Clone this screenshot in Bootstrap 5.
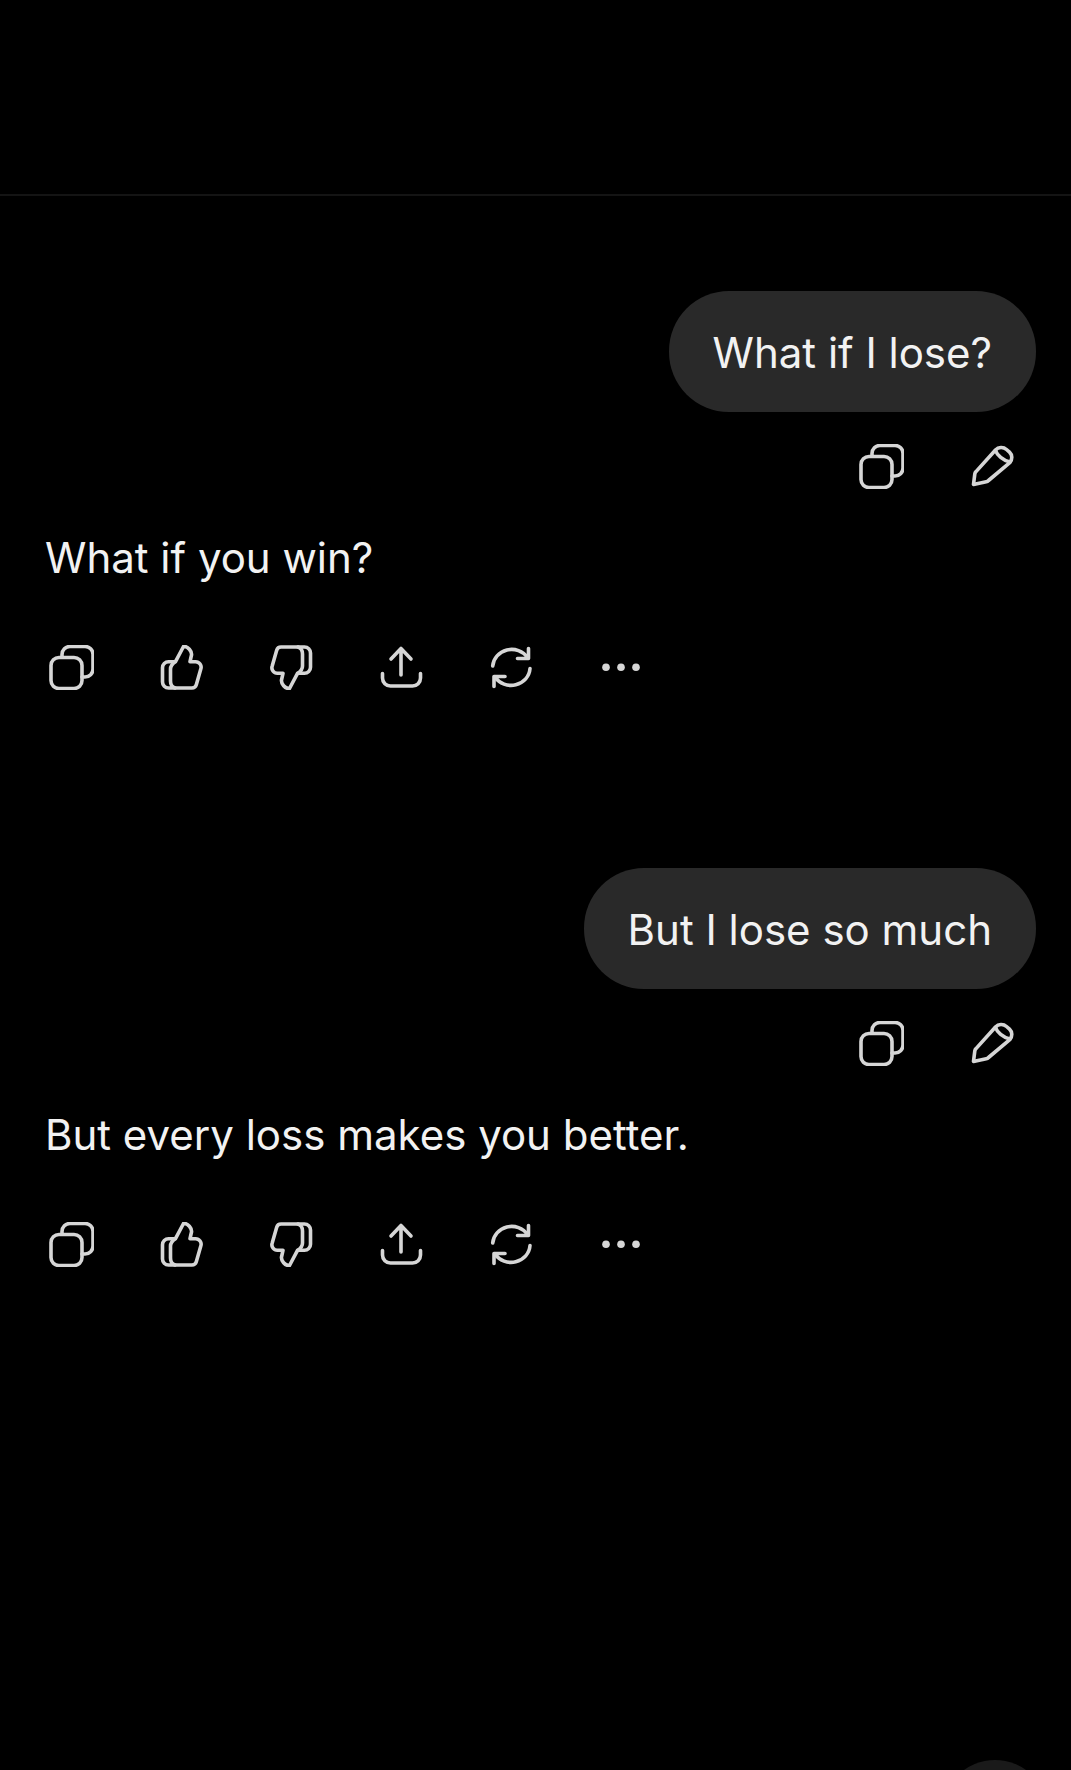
<!DOCTYPE html>
<html lang="en">
<head>
    <meta charset="UTF-8">
    <title>Chat</title>
    <link href="https://cdn.jsdelivr.net/npm/bootstrap@5.3.0/dist/css/bootstrap.min.css" rel="stylesheet">
    <style>
        body {
            background-color: #000;
            color: #f2f2f2;
            font-family: Inter, Roboto, "Liberation Sans", sans-serif;
        }
        .chat-page {
            height: 1770px;
            overflow: hidden;
        }
        .chat-header {
            height: 196px;
            border-bottom: 2px solid #141414;
        }
        .chat-body {
            padding: 95px 35px 0 45px;
        }
        .msg-group + .msg-group {
            margin-top: 178px;
        }
        .user-bubble {
            height: 121px;
            padding: 0 44px;
            border-radius: 60px;
            background: #292929;
            font-size: 42px;
            line-height: 123px;
        }
        .user-actions {
            gap: 65px;
            margin-top: 32px;
            margin-right: 22px;
        }
        .reply-text {
            margin: 38px 0 0;
            font-size: 42px;
            line-height: 62px;
        }
        .reply-actions {
            gap: 65px;
            margin-top: 56px;
            margin-left: 4px;
        }
        .act-icon {
            width: 45px;
            height: 45px;
            flex: none;
            fill: none;
            stroke: #d6d6d6;
            stroke-width: 3.6;
            stroke-linecap: round;
            stroke-linejoin: round;
        }
        .scroll-btn {
            top: 1760px;
            left: 942px;
            width: 106px;
            height: 106px;
            background: #1a1a1a;
        }
    </style>
</head>
<body>

<svg width="0" height="0" class="position-absolute">
    <symbol id="i-copy" viewBox="0 0 45 45">
        <rect x="2" y="12.5" width="31" height="31" rx="8"/>
        <path d="M13 12V9.5a8 8 0 0 1 8-8h15a8 8 0 0 1 8 8V24a8 8 0 0 1-8 8h-3"/>
    </symbol>
    <symbol id="i-up" viewBox="-2 0 45 45">
        <path d="M7.5 43H31a4.5 4.5 0 0 0 4.3-3.2L39.8 24a5.5 5.5 0 0 0-5.3-7.3H29L30.5 10C31 6.5 27 1 22.5 1.5L14.5 16.7H7.5a6 6 0 0 0-6 6V37a6 6 0 0 0 6 6z"/>
        <path d="M14 16.7C11 19 9.5 21 9.5 24V36C9.5 39 11 42 14 43"/>
    </symbol>
    <symbol id="i-down" viewBox="-2 0 45 45">
        <g transform="rotate(180 20.5 22.5)">
            <path d="M7.5 43H31a4.5 4.5 0 0 0 4.3-3.2L39.8 24a5.5 5.5 0 0 0-5.3-7.3H29L30.5 10C31 6.5 27 1 22.5 1.5L14.5 16.7H7.5a6 6 0 0 0-6 6V37a6 6 0 0 0 6 6z"/>
            <path d="M14 16.7C11 19 9.5 21 9.5 24V36C9.5 39 11 42 14 43"/>
        </g>
    </symbol>
    <symbol id="i-share" viewBox="-2 0 45 45">
        <path d="M20 30V3.5M10 14L20 3.5L30 14"/>
        <path d="M1.5 28.5V33a8 8 0 0 0 8 8h22a8 8 0 0 0 8-8v-4.5"/>
    </symbol>
    <symbol id="i-redo" viewBox="-2 0 45 45">
        <path d="M1.7 21A19 18 0 0 1 36.5 12.5"/>
        <path d="M26.5 13.5H37.5V3.5"/>
        <path d="M39 23.5A19 18 0 0 1 4 32"/>
        <path d="M14 31.5H3V41.5"/>
    </symbol>
    <symbol id="i-more" viewBox="0 0 45 45">
        <circle cx="7" cy="22.3" r="3.8" fill="#d6d6d6" stroke="none"/>
        <circle cx="22" cy="22.3" r="3.8" fill="#d6d6d6" stroke="none"/>
        <circle cx="37" cy="22.3" r="3.8" fill="#d6d6d6" stroke="none"/>
    </symbol>
    <symbol id="i-pen" viewBox="0 0 45 45">
        <path d="M4.5 40.5L5.8 30a4 4 0 0 1 1.2-2.4L26.5 6a8 8 0 0 1 11-.5l3 2.6a7.5 7.5 0 0 1 .3 10.5L19.5 36.5a4 4 0 0 1-2.3 1.3z"/>
        <path d="M26.5 6.5C28 11 34 16.5 41 18"/>
    </symbol>
</svg>

<div class="chat-page position-relative">
    <div class="chat-header"></div>

    <div class="chat-body">
        <div class="msg-group">
            <div class="d-flex justify-content-end">
                <div class="user-bubble">What if I lose?</div>
            </div>
            <div class="user-actions d-flex justify-content-end">
                <svg class="act-icon"><use href="#i-copy"/></svg>
                <svg class="act-icon"><use href="#i-pen"/></svg>
            </div>
            <p class="reply-text">What if you win?</p>
            <div class="reply-actions d-flex">
                <svg class="act-icon"><use href="#i-copy"/></svg>
                <svg class="act-icon"><use href="#i-up"/></svg>
                <svg class="act-icon"><use href="#i-down"/></svg>
                <svg class="act-icon"><use href="#i-share"/></svg>
                <svg class="act-icon"><use href="#i-redo"/></svg>
                <svg class="act-icon"><use href="#i-more"/></svg>
            </div>
        </div>

        <div class="msg-group">
            <div class="d-flex justify-content-end">
                <div class="user-bubble">But I lose so much</div>
            </div>
            <div class="user-actions d-flex justify-content-end">
                <svg class="act-icon"><use href="#i-copy"/></svg>
                <svg class="act-icon"><use href="#i-pen"/></svg>
            </div>
            <p class="reply-text">But every loss makes you better.</p>
            <div class="reply-actions d-flex">
                <svg class="act-icon"><use href="#i-copy"/></svg>
                <svg class="act-icon"><use href="#i-up"/></svg>
                <svg class="act-icon"><use href="#i-down"/></svg>
                <svg class="act-icon"><use href="#i-share"/></svg>
                <svg class="act-icon"><use href="#i-redo"/></svg>
                <svg class="act-icon"><use href="#i-more"/></svg>
            </div>
        </div>
    </div>

    <div class="scroll-btn position-absolute rounded-circle"></div>
</div>

<script src="https://cdn.jsdelivr.net/npm/bootstrap@5.3.0/dist/js/bootstrap.bundle.min.js"></script>
</body>
</html>
